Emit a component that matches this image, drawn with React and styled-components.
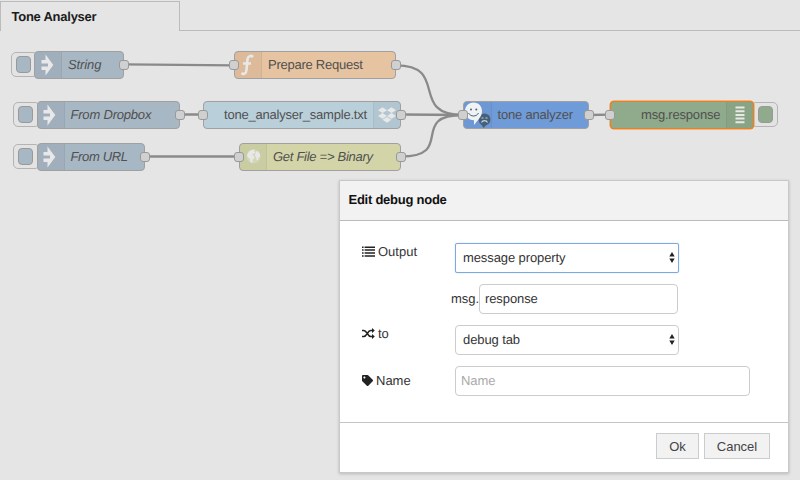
import React from "react";
import styled, { createGlobalStyle } from "styled-components";
import { FaDropbox, FaTag } from "react-icons/fa";

const GlobalStyle = createGlobalStyle`
  * { box-sizing: border-box; }
  body {
    margin: 0;
    background: #e5e5e5;
    font-family: "Liberation Sans", Arial, sans-serif;
    font-size: 13px;
    color: #333;
    text-rendering: geometricPrecision;
  }
`;

const Editor = styled.div`
  position: relative;
  width: 800px;
  height: 480px;
  overflow: hidden;
  display: flex;
  flex-direction: column;
`;

const TabBar = styled.div`
  display: flex;
  height: 31px;
  padding-top: 1px;
`;

const Tab = styled.div`
  width: 180px;
  height: 30px;
  border: 1px solid #bbb;
  border-bottom: 0;
  padding-left: 10.5px;
  line-height: 29px;
  font-weight: bold;
  letter-spacing: -0.25px;
  color: #1c1c1c;
`;

const TabRest = styled.div`
  flex: 1;
  border-bottom: 1px solid #bbb;
`;

const Canvas = styled.div`
  position: absolute;
  inset: 0;
`;

const Wires = styled.svg`
  position: absolute;
  inset: 0;
  fill: none;
  stroke: #8a8a8a;
  stroke-width: 2.3;
`;

const NodeBox = styled.div`
  position: absolute;
  left: ${(p) => p.$x}px;
  top: ${(p) => p.$y}px;
  width: ${(p) => p.$w}px;
  height: 28px;
  display: flex;
  border: 1px solid ${(p) => (p.$selected ? "#ee7f1b" : "#a0a0a0")};
  box-shadow: ${(p) => (p.$selected ? "0 0 0 .5px #ee8a30" : "none")};
  border-radius: 4px;
  background: ${(p) => p.$color};
`;

const IconCell = styled.div`
  order: ${(p) => (p.$right ? 2 : 0)};
  flex: 0 0 27px;
  display: flex;
  align-items: center;
  justify-content: center;
  color: #e8e8e8;
  background: ${(p) => (p.$bare ? "rgba(0,0,0,.015)" : "rgba(0,0,0,.04)")};
  border-${(p) => (p.$right ? "left" : "right")}: 1px solid rgba(0, 0, 0, .05);
  border-radius: ${(p) => (p.$right ? "0 3px 3px 0" : "3px 0 0 3px")};
`;

const NodeLabel = styled.span`
  flex: 1;
  padding-left: ${(p) => p.$pad}px;
  line-height: 26px;
  white-space: nowrap;
  color: #505050;
  font-style: ${(p) => (p.$italic ? "italic" : "normal")};
  letter-spacing: ${(p) => p.$track || 0}px;
`;

const Port = styled.i`
  position: absolute;
  top: 8px;
  ${(p) => p.$side}: -6px;
  width: 10px;
  height: 10px;
  border: 1px solid #999;
  border-radius: 3px;
  background: #d0d0d0;
`;

const NodeButton = styled.div`
  position: absolute;
  left: ${(p) => p.$x}px;
  top: ${(p) => p.$y}px;
  width: 27px;
  height: 25px;
  display: flex;
  align-items: center;
  justify-content: ${(p) => (p.$right ? "flex-end" : "flex-start")};
  padding: 0 4px;
  border: 1px solid #b4b4b4;
  border-radius: 5px;
  background: #e3e3e3;
`;

const ButtonFace = styled.div`
  width: 15px;
  height: 17px;
  border: 1px solid #999;
  border-radius: 4px;
  background: ${(p) => p.$color};
`;

const Dialog = styled.section`
  position: absolute;
  left: 339px;
  top: 180px;
  width: 450px;
  height: 293px;
  display: flex;
  flex-direction: column;
  border: 1px solid #c8c8c8;
  background: #fff;
  box-shadow: 0 1px 3px rgba(0, 0, 0, .2);
`;

const DialogTitle = styled.header`
  height: 40px;
  padding-left: 8.5px;
  line-height: 38px;
  font-weight: bold;
  letter-spacing: -0.25px;
  color: #111;
  background: #f2f2f2;
  border-bottom: 1px solid #bbb;
`;

const Form = styled.div`
  flex: 1;
  display: flex;
  flex-direction: column;
  gap: 11px;
  padding: 21.5px 0 0 22px;
`;

const Row = styled.div`
  display: flex;
  height: 30px;
  align-items: ${(p) => (p.$centered ? "center" : "flex-start")};
`;

const RowLabel = styled.div`
  width: 93px;
  height: 18px;
  display: flex;
  align-items: center;
  gap: ${(p) => p.$gap}px;
  color: #333;
  svg { color: #222; }
`;

const Prefix = styled.span`
  width: 28px;
  margin-left: -4px;
  line-height: 29px;
`;

const Field = styled.div`
  width: ${(p) => p.$w}px;
  height: 30px;
  display: flex;
  align-items: center;
  justify-content: space-between;
  padding: 0 3px 1px ${(p) => p.$pad || 5}px;
  border: 1px solid ${(p) => (p.$focus ? "#7ea8e0" : "#ccc")};
  border-radius: ${(p) => (p.$focus ? 2 : 4)}px;
  box-shadow: ${(p) => (p.$focus ? "0 0 1px #7ea8e0" : "none")};
  letter-spacing: -0.1px;
  color: ${(p) => (p.$muted ? "#aaa" : "#333")};
`;

const Footer = styled.footer`
  height: 50px;
  display: flex;
  gap: 5px;
  justify-content: flex-end;
  align-items: flex-start;
  padding: 10px 18px 0 0;
  border-top: 1px solid #c4c4c4;
`;

const Button = styled.button`
  width: ${(p) => p.$w}px;
  height: 26px;
  padding: 0;
  border: 1px solid #ccc;
  background: #f2f2f2;
  color: #444;
  font: inherit;
`;

const InjectIcon = () => (
  <svg width="17" height="22" viewBox="0 0 17 22" fill="currentColor">
    <path d="M5.500 .5 13.300 11 5.500 21.500V16H1.500V12.600H8V9.400H1.500V6H5.500Z" />
  </svg>
);

const FunctionIcon = () => (
  <svg width="16" height="22" viewBox="0 0 16 22" fill="none" stroke="currentColor" strokeWidth="2.6">
    <path d="M13 3C11 1 8 2 7.500 5L6.500 16C6.200 20 3.500 20.800 1.500 19M3 9.500H11" />
  </svg>
);

const DebugIcon = () => (
  <svg width="10" height="18" viewBox="0 0 10 18" stroke="currentColor" strokeWidth="2">
    <path d="M.5 1.500H9.500M.5 5.200H9.500M.5 8.900H9.500M.5 12.600H9.500M.5 16.300H9.500" />
  </svg>
);

const GlobeIcon = () => (
  <svg width="15" height="15" viewBox="0 0 15 15" fill="currentColor">
    <circle cx="7.500" cy="7.500" r="7" opacity=".35" />
    <path d="M1 6 3 2.500 6 .8 9 .6 8 2.300 9.500 3.300 7.500 5 5.500 5.300 7.500 6.500 8.700 9 6.800 10.500 6.200 14 4.300 12.500 4.200 10 2 8.500Z" />
    <path d="M10 3 11.500 1.800 13.700 4.500 14.300 8 12.800 8.200 12 11 10.500 11 10.200 8 8.800 6.500Z" />
  </svg>
);

const ToneIcon = () => (
  <svg width="27" height="26" viewBox="0 0 27 26">
    <circle cx="20.500" cy="17.500" r="6" fill="#456078" />
    <path d="M16 20.500L19.500 26 23 22Z" fill="#456078" />
    <path d="M9.500 .5C15 .5 18 4.500 18 9.200 18 14.500 13.800 18 10 23V18.200C4 18 1 14 1 9.200 1 4 4.500 .5 9.500 .5Z" fill="#f0f2f3" />
    <circle cx="7" cy="7.500" r="1" fill="#44627a" />
    <circle cx="12.300" cy="7.500" r="1" fill="#44627a" />
    <path d="M4.500 11C6.500 15 12.500 15 14.500 11" fill="none" stroke="#44627a" />
    <path d="M17.500 20.500C18.500 18 22.500 18 23.500 20.500M17.500 16H19.500M21.500 16H23.500" fill="none" stroke="#c4d4e0" strokeWidth="1.100" />
  </svg>
);

const ListIcon = () => (
  <svg width="13" height="11" viewBox="0 0 13 11" stroke="currentColor" strokeWidth="1.500">
    <path d="M0 1.200H1.600M2.600 1.200H13M0 4.100H1.600M2.600 4.100H13M0 7H1.600M2.600 7H13M0 9.900H1.600M2.600 9.900H13" />
  </svg>
);

const ShuffleIcon = () => (
  <svg width="13" height="11" viewBox="0 0 13 11" fill="none" stroke="currentColor" strokeWidth="1.500">
    <path d="M0 2.500H1.800C5 2.500 5.500 8.500 8.700 8.500H10.500M0 8.500H1.800C5 8.500 5.500 2.500 8.700 2.500H10.500" />
    <path d="M10 0 12.800 2.500 10 5ZM10 6 12.800 8.500 10 11Z" fill="currentColor" stroke="none" />
  </svg>
);

const SortArrows = () => (
  <svg width="6" height="11" viewBox="0 0 6 11" fill="#222">
    <path d="M3 0 5.700 4.400H.3ZM3 11 .3 6.600H5.700Z" />
  </svg>
);

const nodes = [
  { label: "String", x: 34, y: 50.5, w: 90, pad: 6, track: -0.1, color: "#a8b7c4", icon: <InjectIcon />, italic: true, out: true },
  { label: "From Dropbox", x: 36.5, y: 100.5, w: 143.5, pad: 6, track: -0.2, color: "#a8b7c4", icon: <InjectIcon />, italic: true, out: true },
  { label: "From URL", x: 36.5, y: 142.5, w: 108, pad: 6, track: -0.35, color: "#a8b7c4", icon: <InjectIcon />, italic: true, out: true },
  { label: "Prepare Request", x: 234, y: 51.4, w: 162, pad: 6, track: -0.25, color: "#e6c3a1", icon: <FunctionIcon />, in: true, out: true },
  { label: "tone_analyser_sample.txt", x: 203, y: 100.5, w: 198, pad: 20, track: -0.22, color: "#b9cfda", icon: <FaDropbox size={18} />, right: true, in: true, out: true },
  { label: "Get File => Binary", x: 239, y: 142.5, w: 162, pad: 6, track: -0.28, color: "#d3d5a8", icon: <GlobeIcon />, italic: true, in: true, out: true },
  { label: "tone analyzer", x: 462.5, y: 101, w: 126.5, pad: 6, track: -0.2, color: "#6f9bd8", icon: <ToneIcon />, bare: true, in: true, out: true },
  { label: "msg.response", x: 610, y: 100.6, w: 144, pad: 30, track: -0.2, color: "#8fab8b", icon: <DebugIcon />, right: true, selected: true, in: true },
];

const FlowNode = ({ n }) => (
  <NodeBox $x={n.x} $y={n.y} $w={n.w} $color={n.color} $selected={n.selected}>
    <IconCell $right={n.right} $bare={n.bare}>{n.icon}</IconCell>
    <NodeLabel $pad={n.pad} $italic={n.italic} $track={n.track}>{n.label}</NodeLabel>
    {n.in && <Port $side="left" />}
    {n.out && <Port $side="right" />}
  </NodeBox>
);

export default function App() {
  return (
    <Editor>
      <GlobalStyle />
      <TabBar>
        <Tab>Tone Analyser</Tab>
        <TabRest />
      </TabBar>
      <Canvas>
        <Wires width="800" height="480">
          <path d="M124 64.300 234 65.300M180 114.500H204M144.500 156.500H239M589 115 610 114.600" />
          <path d="M396 65.300C450 65.300 408 115 463 115" />
          <path d="M401 114.500 463 115" />
          <path d="M401 156.500C456 156.500 408 115 463 115" />
        </Wires>
        <NodeButton $x={11} $y={52}><ButtonFace $color="#a8b7c4" /></NodeButton>
        <NodeButton $x={13} $y={102}><ButtonFace $color="#a8b7c4" /></NodeButton>
        <NodeButton $x={13} $y={144}><ButtonFace $color="#a8b7c4" /></NodeButton>
        <NodeButton $x={751} $y={102} $right><ButtonFace $color="#8fab8b" /></NodeButton>
        {nodes.map((n) => <FlowNode key={n.label} n={n} />)}
      </Canvas>
      <Dialog>
        <DialogTitle>Edit debug node</DialogTitle>
        <Form>
          <Row>
            <RowLabel $gap={3}><ListIcon />Output</RowLabel>
            <Field $w={224} $pad={7} $focus>message property<SortArrows /></Field>
          </Row>
          <Row>
            <RowLabel />
            <Prefix>msg.</Prefix>
            <Field $w={199}>response</Field>
          </Row>
          <Row>
            <RowLabel $gap={3}><ShuffleIcon />to</RowLabel>
            <Field $w={224} $pad={7}>debug tab<SortArrows /></Field>
          </Row>
          <Row $centered>
            <RowLabel $gap={3}><FaTag size={11} />Name</RowLabel>
            <Field $w={295} $muted>Name</Field>
          </Row>
        </Form>
        <Footer>
          <Button $w={43}>Ok</Button>
          <Button $w={66}>Cancel</Button>
        </Footer>
      </Dialog>
    </Editor>
  );
}
